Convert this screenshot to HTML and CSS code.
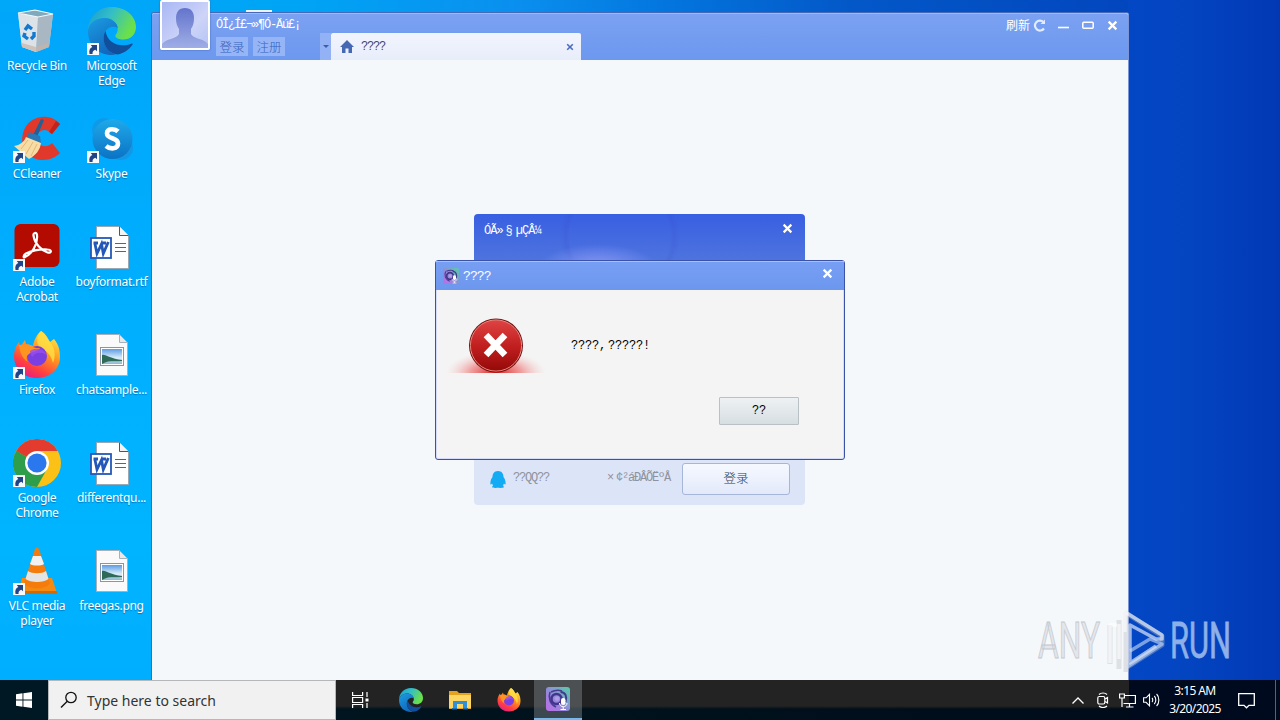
FILE: index.html
```html
<!DOCTYPE html>
<html lang="en">
<head>
    <meta charset="UTF-8">
    <meta name="viewport" content="width=device-width, initial-scale=1.0">
    <title>Desktop</title>
    <link rel="stylesheet" href="styles.css">
</head>
<body>
    <svg class="defs" width="0" height="0">
        <defs>
            <linearGradient id="edgeGreen" x1="0" y1="0" x2="1" y2="0.4">
                <stop offset="0" stop-color="#159ad8"/>
                <stop offset="0.5" stop-color="#35bfc4"/>
                <stop offset="1" stop-color="#6be04a"/>
            </linearGradient>
            <linearGradient id="edgeBlue" x1="0" y1="0" x2="0.5" y2="1">
                <stop offset="0" stop-color="#1b9de2"/>
                <stop offset="1" stop-color="#1268bd"/>
            </linearGradient>
            <linearGradient id="foxBody" x1="0.8" y1="0" x2="0.25" y2="1">
                <stop offset="0" stop-color="#fff04a"/>
                <stop offset="0.4" stop-color="#ff9a1f"/>
                <stop offset="0.75" stop-color="#ff4040"/>
                <stop offset="1" stop-color="#e6198c"/>
            </linearGradient>
            <linearGradient id="skypeBg" x1="0" y1="0" x2="0" y2="1">
                <stop offset="0" stop-color="#1fa9ea"/>
                <stop offset="1" stop-color="#0b73c4"/>
            </linearGradient>
            <linearGradient id="photoSky" x1="0" y1="0" x2="0" y2="1">
                <stop offset="0" stop-color="#5c9ce4"/>
                <stop offset="0.6" stop-color="#dceffa"/>
                <stop offset="1" stop-color="#8ab8cf"/>
            </linearGradient>
            <linearGradient id="appBg" x1="0" y1="1" x2="1" y2="0">
                <stop offset="0" stop-color="#c06be8"/>
                <stop offset="0.5" stop-color="#8d8fd8"/>
                <stop offset="1" stop-color="#55cfa8"/>
            </linearGradient>
            <linearGradient id="errRed" x1="0" y1="0" x2="0" y2="1">
                <stop offset="0" stop-color="#df4343"/>
                <stop offset="0.5" stop-color="#c22020"/>
                <stop offset="1" stop-color="#950808"/>
            </linearGradient>
            <radialGradient id="errGlow">
                <stop offset="0" stop-color="#d81818" stop-opacity="1"/>
                <stop offset="0.5" stop-color="#ee6060" stop-opacity="0.6"/>
                <stop offset="1" stop-color="#f4c0c0" stop-opacity="0"/>
            </radialGradient>
            <linearGradient id="avatarMan" x1="0" y1="0" x2="0" y2="1">
                <stop offset="0" stop-color="#6474cc"/>
                <stop offset="1" stop-color="#a0aee6"/>
            </linearGradient>
        </defs>

        <symbol id="arrow" viewBox="0 0 12 12">
            <rect width="12" height="12" fill="#f7f8fa"/>
            <path d="M2.500 11C1.800 7.500 2.800 5 5.300 4L3.800 2H10v6.200L8.300 6.700C6 7.600 5.200 9 5.600 11z" fill="#1f4588"/>
        </symbol>
        <symbol id="edge" viewBox="0 0 48 48">
            <path d="M0 24C0 10 10 0 24 0s24 9.500 24 20c0 8-6 12.500-12.500 12.500-6 0-9-2.200-8-4.500 1.200-2 2.200-3 2.200-6 0-6-6-11-13-11C8 11 1 16 0 24z" fill="url(#edgeGreen)"/>
            <path d="M0 24C1 16 8 11 16.700 11c7 0 13 5 13 10-3.200-2.400-9.700-2-12.700 4-4 8 1 19 11 22.600-1.300.3-2.700.4-4 .4C10 48 0 38 0 24z" fill="url(#edgeBlue)"/>
            <path d="M17.500 24c-5 9 .5 22 12 23.500 6-1 11.500-4.600 15-9.700.5-1-.4-1.600-1.300-1C32 41 19.500 36.500 17.500 24z" fill="#114f9c"/>
        </symbol>
        <symbol id="firefox" viewBox="0 0 48 48">
            <path d="M28 0c5 3 7 8 9 11l4-3c5 6 6 12 6 18 0 12-10 21-23 21S1 38 1 25c0-6 2-10 5-14l1 5 5-7 1 4c3 0 5 1 7 2 1-6 4-12 8-15z" fill="url(#foxBody)"/>
            <path d="M28 0c5 3 7 8 9 11 5 6 6 14 3 21-2-8-6-12-12-15-4-3-6-9 0-17z" fill="#ffe045" opacity="0.8"/>
            <circle cx="24" cy="25" r="10" fill="#7a3fe0"/>
            <path d="M6 14c5-1 10-1 14 2 2 1 4 1 7 1-2 4-8 3-11 6-3 2-3 5-1 8-6-4-8-9-9-17z" fill="#ff9420"/>
            <path d="M17 20c5-4 14-3 17 4-5-3-11-3-14 1-1 2-3-3-3-5z" fill="#9a4df0" opacity="0.8"/>
        </symbol>
        <symbol id="word" viewBox="0 0 48 48">
            <path d="M8.500 3.500h23l9 9v33h-32z" fill="#fff" stroke="#9aa7b4"/>
            <path d="M31.500 3.500v9h9" fill="#f3f3f3" stroke="#555"/>
            <path d="M27 20.500h11M27 24.500h11M27 28.500h11" stroke="#2b6cc4" stroke-width="1.200"/>
            <rect x="3" y="15" width="20" height="20" fill="#fff" stroke="#2458b8" stroke-width="1.800"/>
            <path d="M5.500 20H10M14 20h4M6.800 20l2.200 10.500L13.500 21l1.800 9.500 5-11.500" fill="none" stroke="#2458b8" stroke-width="2.800"/>
        </symbol>
        <symbol id="photo" viewBox="0 0 48 48">
            <path d="M8.500 3.500h23l8 8v33h-31z" fill="#fafafa" stroke="#a9b0b8"/>
            <path d="M31.500 3.500v8h8z" fill="#e6e8ea" stroke="#a9b0b8"/>
            <rect x="12.500" y="16.500" width="23" height="18" fill="#fff" stroke="#8a96a8"/>
            <rect x="14" y="18" width="20" height="15" fill="url(#photoSky)"/>
            <path d="M14 24c4-1 8 4 20 5v1c-8 1-14-1-20 3z" fill="#2f6a58"/>
        </symbol>
        <symbol id="app" viewBox="0 0 24 24">
            <rect width="24" height="24" rx="3" fill="url(#appBg)"/>
            <path d="M4 5c-2 6 0 12 6 15M5 5c4-2 8-2 11-1" fill="none" stroke="#4a3a92" stroke-width="1.600"/>
            <circle cx="10.500" cy="12" r="5" fill="none" stroke="#43358a" stroke-width="2.500"/>
            <circle cx="11" cy="11.500" r="2.300" fill="#b59be8"/>
            <path d="M14.500 5c5 0 7 5 5 10" fill="none" stroke="#3d3f86" stroke-width="2"/>
            <rect x="15" y="11" width="4.500" height="7" rx="2.200" fill="#fff"/>
            <path d="M13.500 16c0 5 7.500 5 7.500 0M17.200 20v2.500M14.500 22.500h5.500" fill="none" stroke="#fff"/>
        </symbol>
        <symbol id="cross" viewBox="0 0 10 10">
            <path d="M1.500 1.500l7 7M8.500 1.500l-7 7" stroke="currentColor" stroke-width="2" fill="none"/>
        </symbol>
    </svg>

    <div class="desktop">
        <div class="icons">
            <div class="icon">
                <svg viewBox="0 0 48 48">
                    <path d="M5 6l17-3 18 4-4 33-13 5-14-5z" fill="#c3d2dc"/>
                    <path d="M5 6l20 4-2 35-14-5z" fill="#dce3e8"/>
                    <path d="M25 10l15-3-4 33-13 5z" fill="#a9b7c2"/>
                    <path d="M5 6l17-3 18 4-15 3z" fill="#7fa9bd" stroke="#f3f8fa" stroke-width="1.200"/>
                    <path d="M9 36l14 4 13-4-1 4-12 5-14-5z" fill="#c9b3a6" opacity="0.7"/>
                    <path d="M12 23l3-4 4 3M21 25l0 4-3 3M15 32l-4-3 1-3" fill="none" stroke="#1179cf" stroke-width="3.400"/>
                </svg>
                <span>Recycle Bin</span>
            </div>
            <div class="icon">
                <svg viewBox="0 0 48 48"><use href="#edge"/></svg>
                <svg class="shortcut"><use href="#arrow"/></svg>
                <span>Microsoft Edge</span>
            </div>
            <div class="icon">
                <svg viewBox="0 0 48 48">
                    <path d="M47 9C37-3 15 0 10 18c-4 15 7 27 20 27 7 0 13-3 17-7l-8-10c-6 6-15 3-15-5 0-8 9-11 15-4z" fill="#e0382a"/>
                    <path d="M47 9l-8 10-3-2 7-11z" fill="#c52219"/>
                    <path d="M28 4l3 1-7 17-4-2z" fill="#245f96"/>
                    <path d="M16 17l11 4 1 8-14-6z" fill="#2a78b5"/>
                    <path d="M13 22l15 6c-1 7-5 12-12 16L1 31c6-1 10-4 12-9z" fill="#f8dca6"/>
                    <path d="M15 25l-7 9M20 27l-7 12M24 29l-6 12" stroke="#e3b872" stroke-width="1"/>
                </svg>
                <svg class="shortcut"><use href="#arrow"/></svg>
                <span>CCleaner</span>
            </div>
            <div class="icon">
                <svg viewBox="0 0 48 48">
                    <circle cx="16" cy="15" r="12" fill="#0f9ae8"/>
                    <circle cx="33" cy="33" r="12" fill="#1398e6"/>
                    <circle cx="24.500" cy="24" r="20" fill="url(#skypeBg)"/>
                    <path d="M30 16.500c-3-3-11-3.500-11 2 0 6 11 3.500 11 10 0 6-8 6-12 2.500" fill="none" stroke="#fff" stroke-width="4.600"/>
                </svg>
                <svg class="shortcut"><use href="#arrow"/></svg>
                <span>Skype</span>
            </div>
            <div class="icon">
                <svg viewBox="0 0 48 48">
                    <rect x="1.500" y="1" width="45" height="43" rx="6" fill="#b30b00"/>
                    <path d="M12 34c7-3 13-13 12-22-.5-3-4-2.500-3.500.5 1 8 8 15 14 17 5 1 4-3 0-3-8-.5-15 1-21.500 4-3 2-3 5-1 3.500z" fill="none" stroke="#fff" stroke-width="2.200"/>
                </svg>
                <svg class="shortcut"><use href="#arrow"/></svg>
                <span>Adobe Acrobat</span>
            </div>
            <div class="icon">
                <svg viewBox="0 0 48 48"><use href="#word"/></svg>
                <span>boyformat.rtf</span>
            </div>
            <div class="icon">
                <svg viewBox="0 0 48 48"><use href="#firefox"/></svg>
                <svg class="shortcut"><use href="#arrow"/></svg>
                <span>Firefox</span>
            </div>
            <div class="icon">
                <svg viewBox="0 0 48 48"><use href="#photo"/></svg>
                <span>chatsample...</span>
            </div>
            <div class="icon">
                <svg viewBox="0 0 48 48">
                    <circle cx="24" cy="24" r="24" fill="#fbc116"/>
                    <path d="M24 24L3.200 12A24 24 0 0 0 24 48l10-18z" fill="#2f9e4b"/>
                    <path d="M24 24L3.200 12A24 24 0 0 1 44.800 12H24z" fill="#e33b2e"/>
                    <path d="M3.200 12l10.400 18L24 24z" fill="#2f9e4b"/>
                    <circle cx="24" cy="24" r="12" fill="#fff"/>
                    <circle cx="24" cy="24" r="9.600" fill="#2b78ee"/>
                </svg>
                <svg class="shortcut"><use href="#arrow"/></svg>
                <span>Google Chrome</span>
            </div>
            <div class="icon">
                <svg viewBox="0 0 48 48"><use href="#word"/></svg>
                <span>differentqu...</span>
            </div>
            <div class="icon">
                <svg viewBox="0 0 48 48">
                    <path d="M9 31h30l5 15H5z" fill="#f58a10"/>
                    <path d="M5 44h39v3H5z" fill="#cf6a05"/>
                    <path d="M22 2q2-3 4 0l11 34c-3 7-23 7-26 0z" fill="#f47b0c"/>
                    <path d="M20 9h8l3 8c-3 2-11 2-14 0z" fill="#f1f1f1"/>
                    <path d="M15 24c4 3 14 3 18 0l2.500 8c-5 4-18 4-23 0z" fill="#e4e4e4"/>
                </svg>
                <svg class="shortcut"><use href="#arrow"/></svg>
                <span>VLC media player</span>
            </div>
            <div class="icon">
                <svg viewBox="0 0 48 48"><use href="#photo"/></svg>
                <span>freegas.png</span>
            </div>
        </div>

        <div class="handle"></div>

        <div class="window">
            <div class="titlebar">
                <div class="user">
                    <div class="greeting mono">ÓÎ¿Í£¬»¶Ó-Äú£¡</div>
                    <div class="links"><a>登录</a><a>注册</a></div>
                </div>
                <div class="tabs">
                    <div class="tab-list"></div>
                    <div class="tab">
                        <svg width="14" height="13" viewBox="0 0 14 13"><path d="M7 0l7 7h-2v6H8.500V8.500h-3V13H2V7H0z" fill="#4468b4"/></svg>
                        <span class="mono">????</span>
                        <svg class="tab-close" width="8" height="8"><use href="#cross"/></svg>
                    </div>
                </div>
                <div class="controls">
                    <span>刷新</span>
                    <svg width="13" height="13" viewBox="0 0 13 13"><path d="M10.500 3A5 5 0 1 0 11 9.500" fill="none" stroke="#e3ecff" stroke-width="2.200"/><path d="M12 .5v4.500H7.500z" fill="#e3ecff"/></svg>
                    <svg class="min" width="12" height="10" viewBox="0 0 12 10"><path d="M0 7.500h11" stroke="#fff" stroke-width="1.600"/></svg>
                    <svg class="max" width="12" height="10" viewBox="0 0 12 10"><rect x=".8" y="2.200" width="10.400" height="6" rx="1" fill="none" stroke="#fff" stroke-width="1.500"/></svg>
                    <svg width="11" height="11"><use href="#cross"/></svg>
                </div>
                <div class="avatar">
                    <svg width="46" height="46" viewBox="0 0 46 46">
                        <path d="M23 6c6 0 9 4 9 10 0 5-1 8-3 11v5c2 5 12 4 17 10v4H0v-4c5-6 15-5 17-10v-5c-2-3-3-6-3-11 0-6 3-10 9-10z" fill="url(#avatarMan)"/>
                    </svg>
                </div>
            </div>
        </div>

        <div class="login">
            <div class="login-head">
                <span class="mono">ÓÃ»<i>§</i>µÇÂ¼</span>
                <svg width="11" height="11"><use href="#cross"/></svg>
            </div>
            <div class="login-foot">
                <svg width="16" height="17" viewBox="0 0 16 17"><path d="M8 0c4 0 5.500 3 5.500 6 1.500 2 2.500 5 2 7.500-.5.300-1-.2-1.500-1l-1 2 1 1.500c-1 1.300-5 1-6 .4-1 .6-5 .9-6-.4l1-1.500-1-2c-.5.800-1 1.300-1.500 1C0 11 1 8 2.500 6 2.500 3 4 0 8 0z" fill="#14abf5"/></svg>
                <span class="mono qq">??QQ??</span>
                <span class="mono register"><i>×</i>¢²áÐÂÕËº<b>Å</b></span>
                <button type="button">登录</button>
            </div>
        </div>

        <div class="dialog">
            <div class="dialog-head">
                <svg width="16" height="16"><use href="#app"/></svg>
                <span class="mono">????</span>
                <svg class="dialog-close" width="11" height="11"><use href="#cross"/></svg>
            </div>
            <div class="dialog-body">
                <svg width="100" height="56" viewBox="0 0 100 56">
                    <ellipse cx="50" cy="56" rx="50" ry="22" fill="url(#errGlow)"/>
                    <circle cx="50" cy="28.500" r="27" fill="#6d1010"/>
                    <circle cx="50" cy="28.500" r="25.600" fill="url(#errRed)" stroke="#ec8a80"/>
                    <path d="M40 18l19 20M59 18L40 38" stroke="#fff" stroke-width="6.500"/>
                </svg>
                <span class="message mono">????, ?????!</span>
            </div>
            <div class="dialog-foot"><button type="button" class="mono">??</button></div>
        </div>

        <svg class="watermark" width="220" height="70" viewBox="0 0 220 70">
            <text class="shade" x="6" y="51" textLength="62" lengthAdjust="spacingAndGlyphs">ANY</text>
            <text class="run" x="138" y="51" textLength="61" lengthAdjust="spacingAndGlyphs">RUN</text>
            <g fill="none" stroke-linejoin="round">
                <path d="M78 57V18M87 62V13M94 65V6l36 23v9L94 61" stroke="#b8bdc6" stroke-opacity="0.400" stroke-width="5"/>
                <path d="M78 56V18h7M87 52V17M93 25V5l37 23v4H124L98 18v38l26-17" stroke="#fff" stroke-opacity="0.600" stroke-width="3.500"/>
                <path d="M98 44l20-12 12 5-35 23" stroke="#c9dcf7" stroke-opacity="0.600" stroke-width="3.500"/>
            </g>
        </svg>

        <div class="taskbar">
            <div class="start">
                <svg width="16" height="16" viewBox="0 0 16 16"><path d="M0 2.200L6.500 1.300V7.500H0zM7.400 1.200L16 0v7.500H7.400zM0 8.400h6.500v6.300L0 13.800zM7.400 8.400H16V16l-8.600-1.200z" fill="#fff"/></svg>
            </div>
            <div class="search">
                <svg width="18" height="18" viewBox="0 0 18 18"><circle cx="11" cy="6.500" r="5.200" fill="none" stroke="#111" stroke-width="1.300"/><path d="M7.300 10.200L1 16.500" stroke="#111" stroke-width="1.400"/></svg>
                <span>Type here to search</span>
            </div>
            <div class="apps">
                <div class="app-button task-view">
                    <svg width="17" height="16" viewBox="0 0 17 16" fill="none" stroke="#fff" stroke-width="1.200"><path d="M.6 0v3.500h10V0M.6 16v-3.500h10V16M.6 5.500h10v5H.6zM15 0v5M15 11v5"/><path d="M13.500 8h3" stroke-width="3"/></svg>
                </div>
                <div class="app-button"><svg width="24" height="24" viewBox="0 0 48 48"><use href="#edge"/></svg></div>
                <div class="app-button">
                    <svg width="22" height="20" viewBox="0 0 22 20"><path d="M0 1h8l2 2h12v16H0z" fill="#e5a21c"/><path d="M0 5h22v13H0z" fill="#fdd562"/><path d="M4 18v-7h14v7h-4v-4H8v4z" fill="#2f8fd8"/><path d="M3 18h5v1.500H3zM14 18h5v1.500h-5z" fill="#1b6fb5"/></svg>
                </div>
                <div class="app-button"><svg width="24" height="24" viewBox="0 0 48 48"><use href="#firefox"/></svg></div>
                <div class="app-button active"><svg width="24" height="24"><use href="#app"/></svg></div>
            </div>
            <div class="tray">
                <svg width="12" height="7" viewBox="0 0 12 7"><path d="M.5 6.500L6 1l5.500 5.500" fill="none" stroke="#fff" stroke-width="1.300"/></svg>
                <svg width="12" height="16" viewBox="0 0 12 16" fill="none" stroke="#fff" stroke-width="1.200"><rect x=".8" y="4.500" width="7" height="7.500" rx="1.500"/><path d="M8 7l2.500-1.500v5.500L8 9.500M2 2.500c2-2 6-2 8 0M2 14c2 2 6 2 8 0"/></svg>
                <svg width="17" height="15" viewBox="0 0 17 15" fill="none" stroke="#fff" stroke-width="1.200"><path d="M6 2.500h10.400v8H4.500M10.500 10.500v3.500M7 14h7.500M.6 1h4.800v4H.6zM3 5v9"/></svg>
                <svg width="17" height="14" viewBox="0 0 17 14" fill="none" stroke="#fff" stroke-width="1.100"><path d="M.6 4.800h2.500l3.400-3.500v11.500L3.100 9.300H.6zM9 5c1 1 1 3 0 4M11.300 3c2 2 2 6 0 8M13.600 1c3 3 3 9 0 12"/></svg>
                <div class="clock"><div>3:15 AM</div><div>3/20/2025</div></div>
                <svg width="17" height="17" viewBox="0 0 17 17"><path d="M.7 1.700h15.600v11.600H11L8.500 15.800 6 13.300H.7z" fill="none" stroke="#fff" stroke-width="1.300"/></svg>
                <div class="show-desktop"></div>
            </div>
        </div>
    </div>
</body>
</html>
```
FILE: styles.css
```css
body {
    margin: 0;
    font-family: "Noto Sans", "Open Sans", sans-serif;
}
.defs {
    position: absolute;
}
svg {
    display: block;
    flex: none;
}
i, b {
    font-style: normal;
    font-weight: normal;
}
.desktop {
    position: relative;
    width: 1280px;
    height: 720px;
    overflow: hidden;
    background:
        linear-gradient(90deg, rgba(0, 58, 185, 0) 1128px, #0347c4 1129px, #0344c1 1190px, #0238b4 1280px),
        linear-gradient(90deg, #00a8fa 0, #00a4f5 300px, #0a8fee 520px, #0377de 660px, #0358c8 850px, #0246bd 1130px);
}
.desktop::before {
    content: "";
    position: absolute;
    top: 12px;
    width: 151px;
    height: 668px;
    background: linear-gradient(#00a6fa, #00b0ff 50%, #00b4ff 80%, #00aeff);
}
.mono {
    font-family: "Liberation Mono", "Noto Sans CJK SC", monospace;
    font-size: 12px;
    letter-spacing: -1.2px;
    white-space: pre;
}

/* desktop icons */
.icons {
    position: relative;
    display: grid;
    grid-template-columns: 74px 75px;
    grid-auto-rows: 108px;
    width: 149px;
    padding-top: 7px;
}
.icon {
    position: relative;
    display: flex;
    flex-direction: column;
    align-items: center;
    color: #fff;
    font-size: 12px;
    line-height: 15px;
    letter-spacing: -0.3px;
    text-align: center;
}
.icon > svg:first-child {
    width: 48px;
    height: 48px;
}
.icon span {
    width: 72px;
    margin-top: 3px;
    display: flex;
    justify-content: center;
    text-shadow: 0 1px 1px rgba(0, 60, 120, 0.5);
}
.icon .shortcut {
    position: absolute;
    left: 13px;
    top: 36px;
    width: 12px;
    height: 12px;
}

/* main window */
.handle {
    position: absolute;
    left: 246px;
    top: 10px;
    width: 26px;
    height: 2px;
    background: #eef3fb;
}
.window {
    position: absolute;
    left: 151px;
    top: 12px;
    box-sizing: border-box;
    width: 978px;
    height: 696px;
    border: 1px solid #4668b8;
    border-right-color: #7b95d8;
    border-radius: 3px 3px 0 0;
    background: #f5f8fb;
}
.titlebar {
    position: relative;
    display: flex;
    height: 47px;
    box-sizing: border-box;
    padding-left: 64px;
    border-top: 1px solid #9dbaf8;
    border-radius: 2px 2px 0 0;
    background: linear-gradient(#7ba1f2, #6c98ee);
}
.avatar {
    position: absolute;
    left: 8px;
    top: -14px;
    border: 2px solid #fff;
    border-radius: 2px;
    background: linear-gradient(135deg, #a9b8f4, #cdd4f8 60%, #b5c4f5);
    box-shadow: 0 0 2px #3f5ca8;
}
.user {
    width: 104px;
}
.greeting {
    height: 23px;
    line-height: 23px;
    color: #fff;
}
.links {
    display: flex;
    gap: 5px;
}
.links a {
    width: 32px;
    height: 19px;
    line-height: 19px;
    text-align: center;
    font-family: "Noto Sans CJK SC", sans-serif;
    font-size: 12.5px;
    font-weight: 300;
    color: #3561bb;
    background: #96b5f7;
}
.tabs {
    display: flex;
    margin-top: 19px;
}
.tab-list {
    width: 11px;
    display: flex;
    align-items: center;
    justify-content: center;
    background: #93b2f5;
}
.tab-list::after {
    content: "";
    border: 3px solid transparent;
    border-top-color: #3a5ea9;
    margin-top: 3px;
}
.tab {
    display: flex;
    align-items: center;
    box-sizing: border-box;
    width: 250px;
    padding: 0 7px 0 9px;
    border-radius: 2px 2px 0 0;
    background: linear-gradient(#f2f5fd, #e8edfb);
    color: #3a4a78;
}
.tab span {
    margin: 1px 0 0 7px;
}
.tab-close {
    margin-left: auto;
    color: #4a6bc2;
}
.controls {
    display: flex;
    align-items: center;
    height: 22px;
    margin-left: auto;
    padding-right: 10px;
    color: #fff;
    font-family: "Noto Sans CJK SC", sans-serif;
    font-size: 12px;
}
.controls span {
    margin: -2px 3px 0 0;
}
.controls .min {
    margin: 0 12px;
}
.controls .max {
    margin-right: 13px;
}

/* login box */
.login {
    position: absolute;
    left: 474px;
    top: 214px;
    width: 331px;
    height: 291px;
    display: flex;
    flex-direction: column;
    justify-content: space-between;
    border-radius: 4px;
    overflow: hidden;
    background: #dce4f7;
}
.login-head {
    display: flex;
    justify-content: space-between;
    height: 80px;
    padding: 9px 12px 0 10px;
    color: #fff;
    background:
        radial-gradient(ellipse 60px 24px at 124px 54px, rgba(150, 160, 250, 0.85), transparent),
        radial-gradient(circle at 146px 22px, transparent 50px, rgba(50, 60, 190, 0.12) 54px, transparent 60px),
        linear-gradient(#385fe2, #5277de 60%);
}
.login-head span {
    line-height: 16px;
    letter-spacing: -1px;
}
.login-head i {
    padding: 0 4px 0 3px;
}
.login-foot {
    display: flex;
    align-items: center;
    height: 52px;
    padding: 0 15px 0 16px;
    color: #8e929e;
}
.login-foot .qq {
    margin: -3px 0 0 7px;
}
.login-foot .register {
    margin: -3px 0 0 auto;
}
.register i {
    padding: 0 3px;
}
.login-foot button {
    box-sizing: border-box;
    width: 108px;
    height: 32px;
    margin: -1px 0 0 12px;
    padding: 0 0 2px;
    border: 1px solid #a6b6d8;
    border-radius: 3px;
    background: linear-gradient(#f6f9ff, #e2e9fa);
    color: #333a4d;
    font-family: "Noto Sans CJK SC", sans-serif;
    font-size: 12.5px;
    font-weight: 300;
}

/* error dialog */
.dialog {
    position: absolute;
    left: 435px;
    top: 260px;
    box-sizing: border-box;
    width: 410px;
    height: 200px;
    border: 1px solid #3a53a8;
    border-radius: 3px;
    background: #f4f4f4;
    box-shadow: inset 0 0 0 1px #d5dcfa;
}
.dialog-head {
    display: flex;
    align-items: center;
    height: 28px;
    padding: 0 11px 0 7px;
    border-top: 1px solid #a6c0fa;
    background: linear-gradient(#769ff4, #6d97ee);
    color: #fff;
}
.dialog-head span {
    margin-left: 4px;
    font-size: 13px;
    letter-spacing: -0.9px;
}
.dialog-close {
    margin: -6px 0 0 auto;
}
.dialog-body {
    display: flex;
    align-items: center;
    padding: 27px 0 0 10px;
    color: #000;
}
.message {
    margin: 2px 0 0 25px;
    font-size: 12px;
    letter-spacing: -0.2px;
    word-spacing: -5px;
}
.dialog-foot {
    display: flex;
    justify-content: flex-end;
    padding: 24px 45px 0 0;
}
.dialog-foot button {
    box-sizing: border-box;
    width: 80px;
    height: 28px;
    padding: 0;
    border: 1px solid #b9c0c6;
    border-radius: 1px;
    background: linear-gradient(#edf1f3, #d7dee2);
    color: #000;
    letter-spacing: -0.2px;
}

/* watermark */
.watermark {
    position: absolute;
    left: 1032px;
    top: 607px;
}
.watermark text {
    font-family: Roboto, sans-serif;
    font-size: 50px;
}
.watermark .shade {
    fill: #e3e6ea;
    stroke: #c3c8d0;
    stroke-width: 1px;
}
.watermark .run {
    fill: #8db0e8;
    stroke: #8db0e8;
    stroke-width: 0.8px;
}

/* taskbar */
.taskbar {
    position: absolute;
    left: 0;
    right: 0;
    bottom: 0;
    height: 40px;
    display: flex;
    background:
        linear-gradient(90deg, #001823 151px, transparent 151px, transparent 1129px, #000a1e 1129px),
        linear-gradient(#232323 26px, transparent 29px),
        linear-gradient(90deg, #001823, #00121c 600px, #000a1a);
}
.start {
    width: 48px;
    display: flex;
    align-items: center;
    justify-content: center;
}
.search {
    display: flex;
    align-items: center;
    box-sizing: border-box;
    width: 288px;
    padding-left: 11px;
    border: 1px solid #b5b8ba;
    background: #f1f1f1;
    color: #333;
    font-size: 14px;
}
.search span {
    margin-left: 9px;
}
.apps {
    display: flex;
    gap: 1px;
}
.app-button {
    width: 48px;
    display: flex;
    align-items: center;
    justify-content: center;
}
.task-view {
    box-sizing: border-box;
    width: 50px;
    padding-right: 2px;
}
.active {
    box-sizing: border-box;
    border-bottom: 2px solid #76b9ed;
    background: rgba(120, 126, 130, 0.5);
}
.tray {
    display: flex;
    align-items: center;
    margin-left: auto;
    gap: 7px;
}
.tray > svg:first-child {
    margin-right: 6px;
}
.tray > svg:nth-child(2) {
    margin-right: 3px;
}
.clock {
    width: 56px;
    color: #fff;
    font-size: 12px;
    line-height: 18px;
    letter-spacing: -0.6px;
    text-align: center;
    white-space: nowrap;
}
.tray > svg:last-of-type {
    margin: 0 20px 0 8px;
}
.show-desktop {
    align-self: stretch;
    width: 4px;
    margin-left: -7px;
    border-left: 1px solid #5a6470;
}
```
